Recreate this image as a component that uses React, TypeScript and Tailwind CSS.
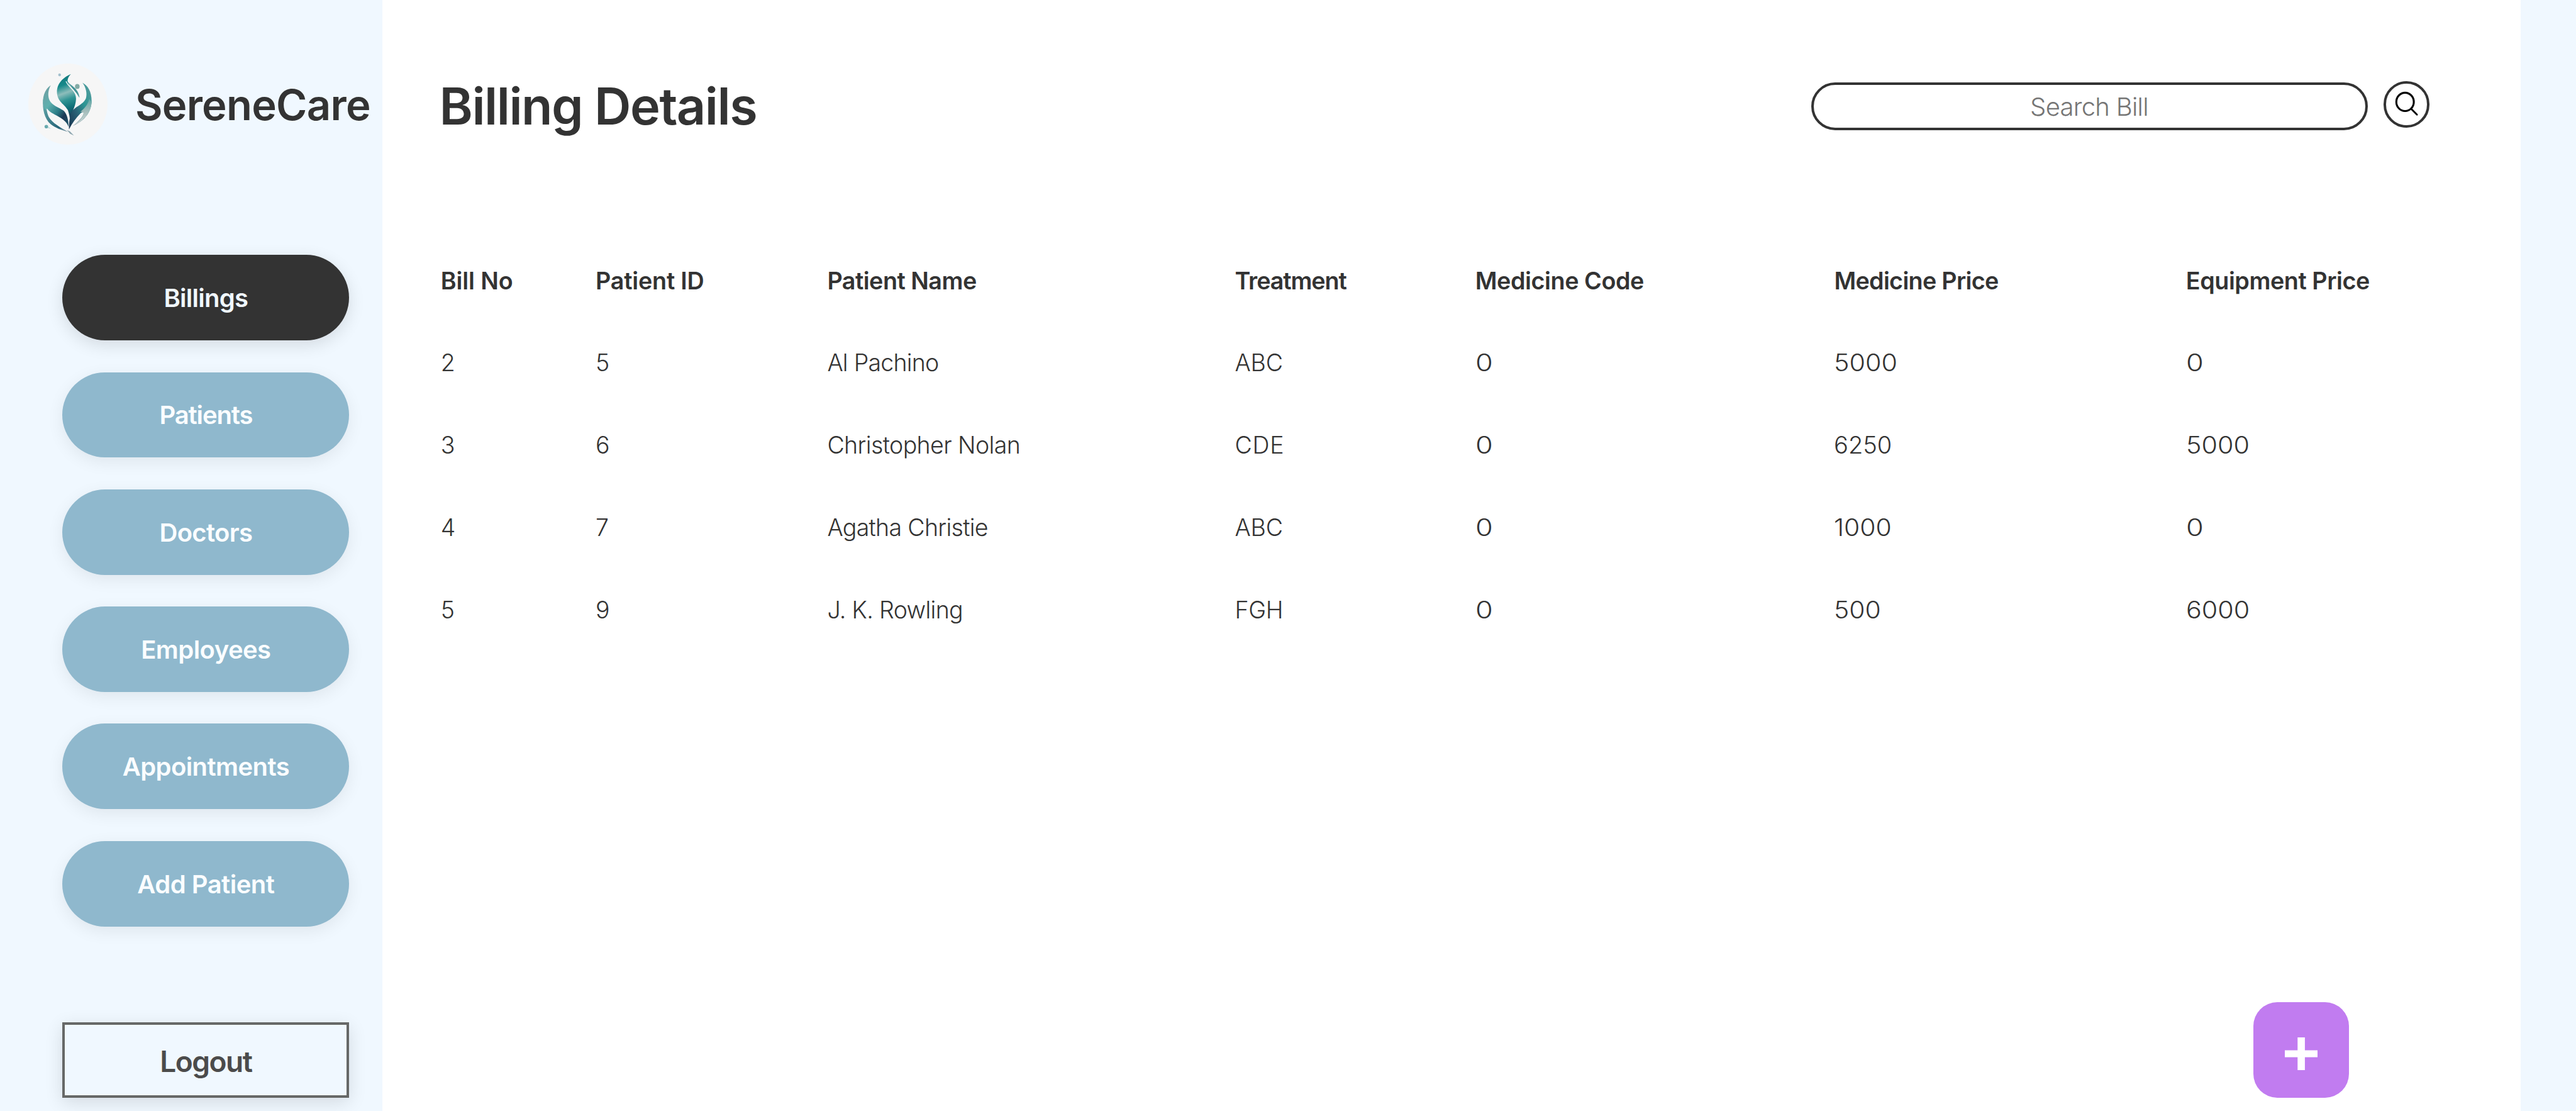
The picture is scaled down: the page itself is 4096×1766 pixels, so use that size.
const nav = [
  { label: "Billings", tracking: "tracking-[-0.75px]", active: true },
  { label: "Patients", tracking: "tracking-[-1.13px]" },
  { label: "Doctors", tracking: "tracking-[-0.68px]" },
  { label: "Employees", tracking: "tracking-[-0.55px]" },
  { label: "Appointments", tracking: "tracking-[-0.58px]" },
  { label: "Add Patient", tracking: "tracking-[-0.5px]" },
];

const columns = [
  { label: "Bill No", tracking: "tracking-[-0.09px]" },
  { label: "Patient ID", tracking: "tracking-[-0.22px]" },
  { label: "Patient Name", tracking: "tracking-[-0.51px]" },
  { label: "Treatment", tracking: "tracking-[-1.09px]" },
  { label: "Medicine Code", tracking: "tracking-[-0.42px]" },
  { label: "Medicine Price", tracking: "tracking-[-0.69px]" },
  { label: "Equipment Price", tracking: "tracking-[-0.44px]" },
];

const bills = [
  ["2", "5", "Al Pachino", "ABC", "0", "5000", "0"],
  ["3", "6", "Christopher Nolan", "CDE", "0", "6250", "5000"],
  ["4", "7", "Agatha Christie", "ABC", "0", "1000", "0"],
  ["5", "9", "J. K. Rowling", "FGH", "0", "500", "6000"],
];

// Optical fitting of cell values: tracking for words, width for figures.
const cellFit: Record<string, string> = {
  "Al Pachino": "tracking-[-0.76px]",
  "Christopher Nolan": "tracking-[-0.6px]",
  "Agatha Christie": "tracking-[-0.68px]",
  "J. K. Rowling": "tracking-[-0.65px]",
  ABC: "tracking-[-0.2px]",
  CDE: "tracking-[0.7px]",
  FGH: "tracking-[-0.28px]",
  "0": "origin-left scale-x-[1.2]",
  "5000": "origin-left scale-x-[1.1]",
  "6000": "origin-left scale-x-[1.1]",
  "6250": "origin-left scale-x-[1.015]",
  "1000": "origin-left scale-x-[1.09]",
  "500": "origin-left scale-x-[1.09]",
};

const rowGrid =
  "grid grid-cols-[246.4px_368.3px_648.1px_382.3px_570.7px_559.4px_1fr] items-center";

function Logo() {
  return (
    <svg className="h-[129px] w-[126px] shrink-0" viewBox="8 88 448 458">
      <defs>
        <linearGradient id="bud" x1="0" y1="0" x2="0.15" y2="1">
          <stop offset="0" stopColor="#127579" />
          <stop offset="0.28" stopColor="#16898a" />
          <stop offset="0.46" stopColor="#8dbdbb" />
          <stop offset="0.62" stopColor="#2f9494" />
          <stop offset="0.8" stopColor="#0f7078" />
          <stop offset="1" stopColor="#1d3f5c" />
        </linearGradient>
        <linearGradient id="left" x1="0.1" y1="0" x2="0.9" y2="1">
          <stop offset="0" stopColor="#6f9ea2" />
          <stop offset="0.35" stopColor="#5fb0ae" />
          <stop offset="0.62" stopColor="#2b7c86" />
          <stop offset="0.8" stopColor="#1c3955" />
          <stop offset="1" stopColor="#1f5469" />
        </linearGradient>
        <linearGradient id="right" x1="1" y1="0" x2="0" y2="1">
          <stop offset="0" stopColor="#5c9da0" />
          <stop offset="0.4" stopColor="#2b9593" />
          <stop offset="0.65" stopColor="#2b6276" />
          <stop offset="1" stopColor="#17334f" />
        </linearGradient>
        <linearGradient id="rim" x1="0" y1="0" x2="0" y2="1">
          <stop offset="0" stopColor="#5fa5a5" />
          <stop offset="0.5" stopColor="#a9bfbd" />
          <stop offset="1" stopColor="#cfdcdc" />
        </linearGradient>
        <linearGradient id="stem" x1="0" y1="0" x2="1" y2="1">
          <stop offset="0" stopColor="#6aaeae" />
          <stop offset="0.75" stopColor="#256377" />
          <stop offset="1" stopColor="#9fb0ba" />
        </linearGradient>
      </defs>
      <ellipse cx="232" cy="317" rx="224" ry="229" fill="#f6f6f6" />
      <path d="M92 290C86 345 100 400 134 430C162 452 200 466 234 474C190 450 144 424 124 390C112 364 108 330 106 300Z" fill="url(#stem)" />
      <path d="M135 210C100 232 84 283 94 328C98 350 106 356 114 342C140 382 214 386 236 446C236 405 226 372 208 354C174 330 128 322 122 274C119 250 125 228 135 210Z" fill="url(#left)" />
      <path d="M226 463L244 472L266 495L244 484Z" fill="#8ca5ae" />
      <path d="M249 147C220 159 170 190 170 248C170 303 214 318 232 352C240 376 243 392 243 410C246 370 276 338 278 288C279 246 240 226 230 186C230 172 237 159 249 147Z" fill="url(#bud)" />
      <path d="M222 190C234 218 262 232 282 262" fill="none" stroke="#f6f6f6" strokeWidth="5" strokeLinecap="round" />
      <path d="M232 193C246 212 290 226 296 278C280 247 252 225 232 193Z" fill="#3f9194" stroke="#3f9194" strokeWidth="2" />
      <path d="M314 196C334 222 342 256 334 284C316 326 262 330 249 372C240 402 238 425 238 460C256 424 278 396 302 370C318 356 326 362 318 378C308 400 282 424 260 440C320 412 364 370 366 300C366 244 344 212 314 196Z" fill="url(#right)" />
      <path d="M352 288C346 322 322 344 302 362C326 356 322 374 312 390C300 410 282 424 260 440C318 414 362 372 366 304Z" fill="url(#rim)" />
      <ellipse cx="285" cy="217" rx="13" ry="14" fill="#83aaa5" />
      <circle cx="185" cy="152" r="8" fill="#a3c0cd" />
      <circle cx="110" cy="444" r="10" fill="#69aaae" />
      <path d="M118 446L138 456L120 452Z" fill="#a5cccd" />
    </svg>
  );
}

export default function App() {
  return (
    <div className="flex h-[1766px] w-[4096px] overflow-hidden bg-[#f0f8ff] font-['Inter',sans-serif] text-[#333333]">
      <aside className="flex w-[608px] shrink-0 flex-col">
        <div className="mt-[100.8px] flex h-[129px] items-center gap-[44.4px] pl-[44.5px]">
          <Logo />
          <span className="pt-[2px] text-[67px] leading-none font-semibold tracking-[-0.72px] whitespace-nowrap">
            SereneCare
          </span>
        </div>

        <nav className="mt-[175.5px] ml-[99.2px] flex w-[456.3px] flex-col gap-[50.5px]">
          {nav.map((n) => (
            <button
              key={n.label}
              className={`flex h-[135.8px] items-center justify-center rounded-full pt-[2px] text-[40px] leading-none font-semibold ${n.tracking} ${
                n.active
                  ? "bg-[#333333] text-[#f0f8ff] shadow-[0_7px_27px_rgba(0,0,0,0.12)]"
                  : "bg-[#8fb8cd] text-[#fafdff] shadow-[0_7px_27px_rgba(0,0,0,0.075)]"
              }`}
            >
              {n.label}
            </button>
          ))}
        </nav>

        <button className="mt-[152.6px] ml-[99.2px] flex h-[120px] w-[456.3px] items-center justify-center border-4 border-[#666867] bg-[#f0f8ff] pt-[4px] text-[46px] leading-none font-semibold tracking-[-1.53px] text-[#4b4b4b] shadow-[0_7px_27px_rgba(0,0,0,0.12)]">
          Logout
        </button>
      </aside>

      <main className="flex w-[3400px] shrink-0 flex-col bg-white">
        <header className="mt-[121px] flex h-24 items-center pr-[145px] pl-[90.6px]">
          <h1 className="text-[81px] leading-none font-semibold tracking-[-1.54px]">Billing Details</h1>
          <input
            className="ml-auto h-[75.2px] w-[885px] rounded-full border-4 border-[#333333] bg-white pr-[2px] text-center text-[40px] leading-none font-light tracking-[-0.73px] outline-none placeholder:text-[#757575]"
            placeholder="Search Bill"
          />
          <button className="mb-[6px] ml-[24.4px] flex size-[73.2px] shrink-0 items-center justify-center rounded-full border-4 border-[#333333]">
            <svg className="size-full" viewBox="38 39 232 232" fill="none" stroke="#000" strokeLinecap="round">
              <ellipse cx="145.5" cy="142" rx="49.5" ry="52" strokeWidth="11" />
              <path d="M181 182L213 214" strokeWidth="10" />
            </svg>
          </button>
        </header>

        <section className="mt-[166.2px] flex flex-col pl-[92.7px] whitespace-nowrap">
          <div className={`${rowGrid} h-[128.2px] text-[37.7px] leading-none font-semibold`}>
            {columns.map((c) => (
              <div key={c.label} className={c.tracking}>
                {c.label}
              </div>
            ))}
          </div>
          {bills.map((row) => (
            <div key={row[0]} className={`${rowGrid} h-[131.1px] text-[37.5px] leading-none font-light`}>
              {row.map((cell, i) => (
                <div key={i} className={cellFit[cell] ?? "tracking-normal"}>
                  {cell}
                </div>
              ))}
            </div>
          ))}
        </section>

        <button className="mt-auto mr-[273px] mb-[21px] flex size-[152px] items-center justify-center self-end rounded-[38px] bg-[#c17cf0] pt-[11px]">
          <svg className="size-[52px]" viewBox="0 0 52 52" fill="#fff">
            <path d="M20.300 0H31.900V20.400H52V31.500H31.900V52H20.300V31.500H0V20.400H20.300Z" />
          </svg>
        </button>
      </main>
    </div>
  );
}
